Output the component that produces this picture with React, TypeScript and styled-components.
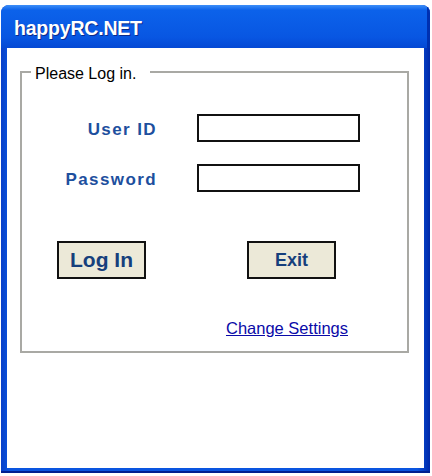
import React from "react";
import styled, { createGlobalStyle } from "styled-components";

const GlobalStyle = createGlobalStyle`
  html, body {
    margin: 0;
    padding: 0;
    background: #ffffff;
  }
  * {
    box-sizing: border-box;
  }
`;

const Window = styled.div`
  display: flex;
  flex-direction: column;
  width: 429px;
  height: 468px;
  margin: 5px 0 0 1px;
  border-radius: 8px 8px 0 0;
  background: linear-gradient(90deg, #0840c8 0%, #0a55e0 2%, #0a55e0 97%, #0028a8 100%);
  box-shadow: inset 0 -2px 0 #002090;
  overflow: hidden;
`;

const TitleBar = styled.div`
  display: flex;
  align-items: center;
  height: 43px;
  padding: 4px 0 0 13px;
  background: linear-gradient(
    180deg,
    #3d8ef8 0%,
    #0c62ea 12%,
    #0a5ce6 45%,
    #0856e2 75%,
    #0549d4 100%
  );
  box-shadow: inset -3px 0 0 #0030b0;
`;

const Title = styled.span`
  font-family: "Liberation Sans", Arial, sans-serif;
  font-weight: 700;
  font-size: 19.5px;
  color: #ffffff;
  letter-spacing: -0.2px;
  text-shadow: 1px 1px 0 #0a2a8c;
`;

const Client = styled.div`
  flex: 1;
  margin: 0 6px 5px 6px;
  background: #ffffff;
  padding: 13px 15px 0 13px;
`;

const GroupBox = styled.fieldset`
  margin: 0;
  padding: 0;
  min-width: 0;
  border: 2px solid #a9a9a4;
  display: flex;
  flex-direction: column;
`;

const Legend = styled.legend`
  margin-left: 9px;
  padding: 4px 14px 0 4px;
  font-family: "Liberation Sans", Arial, sans-serif;
  font-size: 16px;
  line-height: 18px;
  color: #000000;
`;

const Fields = styled.div`
  display: grid;
  grid-template-columns: 135px 163px;
  column-gap: 40px;
  row-gap: 22px;
  margin-top: 31px;
`;

const Label = styled.label`
  align-self: center;
  padding-top: 4px;
  text-align: right;
  font-family: "Liberation Sans", Arial, sans-serif;
  font-weight: 700;
  font-size: 17px;
  letter-spacing: 1.4px;
  color: #1d4f9e;
`;

const TextBox = styled.input<{ $edge: number }>`
  width: 163px;
  height: 28px;
  border: ${p => p.$edge}px solid #111111;
  background: #ffffff;
  padding: 0 4px;
  font-family: "Liberation Sans", Arial, sans-serif;
  font-size: 14px;
  outline: none;
`;

const ButtonRow = styled.div`
  display: flex;
  gap: 101px;
  margin: 49px 0 0 35px;
`;

const Button = styled.button<{ $size: number }>`
  width: 89px;
  height: 38px;
  border: 2px solid #111111;
  background: #ece9d8;
  font-family: "Liberation Sans", Arial, sans-serif;
  font-weight: 700;
  font-size: ${p => p.$size}px;
  color: #163f7c;
  padding: 0;
  cursor: pointer;
`;

const LinkRow = styled.div`
  display: flex;
  justify-content: flex-end;
  padding: 0 59px 0 0;
  margin: 39px 0 13px 0;
`;

const SettingsLink = styled.a`
  font-family: "Liberation Sans", Arial, sans-serif;
  font-size: 16.5px;
  line-height: 20px;
  color: #0a0aa8;
  text-decoration: underline;
  cursor: pointer;
`;

export default function App() {
  return (
    <>
      <GlobalStyle />
      <Window>
        <TitleBar>
          <Title>happyRC.NET</Title>
        </TitleBar>
        <Client>
          <GroupBox>
            <Legend>Please Log in.</Legend>
            <Fields>
              <Label htmlFor="user-id">User ID</Label>
              <TextBox id="user-id" type="text" $edge={2} />
              <Label htmlFor="password">Password</Label>
              <TextBox id="password" type="password" $edge={2} />
            </Fields>
            <ButtonRow>
              <Button $size={21}>Log In</Button>
              <Button $size={18}>Exit</Button>
            </ButtonRow>
            <LinkRow>
              <SettingsLink>Change Settings</SettingsLink>
            </LinkRow>
          </GroupBox>
        </Client>
      </Window>
    </>
  );
}
